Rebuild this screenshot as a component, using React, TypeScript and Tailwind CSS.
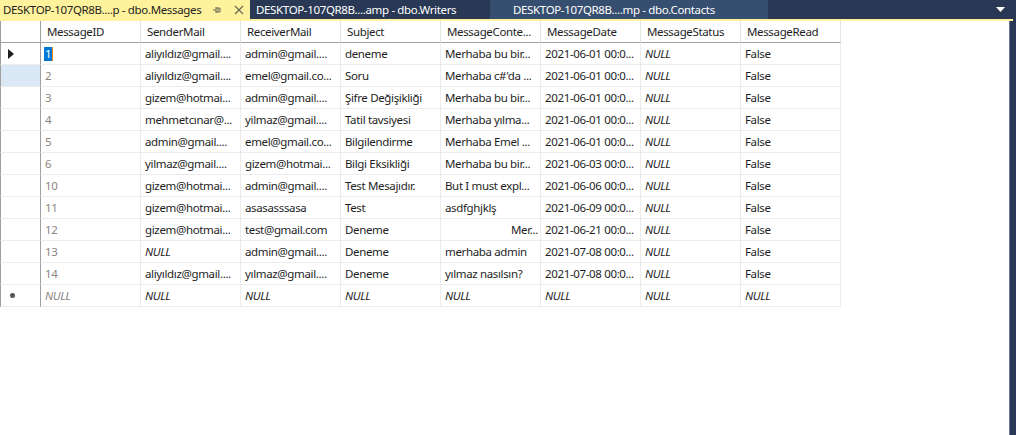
import React from "react";

type Row = {
  id: string;
  sender: string;
  receiver: string;
  subject: string;
  content: string;
  date: string;
  contentRight?: boolean;
};

const COLUMNS = [
  "MessageID",
  "SenderMail",
  "ReceiverMail",
  "Subject",
  "MessageConte...",
  "MessageDate",
  "MessageStatus",
  "MessageRead",
];

const ROWS: Row[] = [
  { id: "1", sender: "aliyıldız@gmail....", receiver: "admin@gmail....", subject: "deneme", content: "Merhaba bu bir...", date: "2021-06-01 00:0..." },
  { id: "2", sender: "aliyıldız@gmail....", receiver: "emel@gmail.co...", subject: "Soru", content: "Merhaba c#'da ...", date: "2021-06-01 00:0..." },
  { id: "3", sender: "gizem@hotmai...", receiver: "admin@gmail....", subject: "Şifre Değişikliği", content: "Merhaba bu bir...", date: "2021-06-01 00:0..." },
  { id: "4", sender: "mehmetcınar@...", receiver: "yilmaz@gmail....", subject: "Tatil tavsiyesi", content: "Merhaba yılma...", date: "2021-06-01 00:0..." },
  { id: "5", sender: "admin@gmail....", receiver: "emel@gmail.co...", subject: "Bilgilendirme", content: "Merhaba Emel ...", date: "2021-06-01 00:0..." },
  { id: "6", sender: "yilmaz@gmail....", receiver: "gizem@hotmai...", subject: "Bilgi Eksikliği", content: "Merhaba bu bir...", date: "2021-06-03 00:0..." },
  { id: "10", sender: "gizem@hotmai...", receiver: "admin@gmail....", subject: "Test Mesajıdır.", content: "But I must expl...", date: "2021-06-06 00:0..." },
  { id: "11", sender: "gizem@hotmai...", receiver: "asasasssasa", subject: "Test", content: "asdfghjklş", date: "2021-06-09 00:0..." },
  { id: "12", sender: "gizem@hotmai...", receiver: "test@gmail.com", subject: "Deneme", content: "Mer...", date: "2021-06-21 00:0...", contentRight: true },
  { id: "13", sender: "NULL", receiver: "admin@gmail....", subject: "Deneme", content: "merhaba admin", date: "2021-07-08 00:0..." },
  { id: "14", sender: "aliyıldız@gmail....", receiver: "yılmaz@gmail....", subject: "Deneme", content: "yılmaz nasılsın?", date: "2021-07-08 00:0..." },
];

function Cell({ value, gray, right }: { value: string; gray?: boolean; right?: boolean }) {
  const isNull = value === "NULL";
  return (
    <div
      className={`h-[22px] border-r border-b border-[#ececec] pl-[4px] pr-[2px] flex items-center overflow-hidden whitespace-nowrap ${
        right ? "justify-end" : ""
      } ${gray ? "text-[#8b8580]" : "text-[#1e1e1e]"} ${isNull ? "italic" : ""}`}
    >
      {value}
    </div>
  );
}

function Tab({ label, active, hover }: { label: string; active?: boolean; hover?: boolean }) {
  if (active) {
    return (
      <div className="w-[250px] h-full bg-[#fff29d] flex items-center pl-[3px] text-[#1e1e1e]">
        <span className="whitespace-nowrap">{label}</span>
        <svg width="10" height="10" viewBox="0 0 10 10" className="ml-[11px]">
          <path d="M1 5h3M4 2v6M4 3h4v4H4M6 3v4" stroke="#6b6b5a" strokeWidth="1" fill="none" />
        </svg>
        <svg width="10" height="10" viewBox="0 0 10 10" className="ml-[12px]">
          <path d="M1 1l8 8M9 1l-8 8" stroke="#6b6b5a" strokeWidth="1.2" />
        </svg>
      </div>
    );
  }
  return (
    <div
      className={`h-full flex items-center whitespace-nowrap text-white ${
        hover ? "w-[278px] bg-[#364e6f] pl-[23px]" : "w-[240px] pl-[6px]"
      }`}
    >
      {label}
    </div>
  );
}

export default function App() {
  return (
    <div
      className="w-[1016px] h-[435px] bg-[#293955] flex flex-col text-[11.5px] tracking-[-0.35px] overflow-hidden"
      style={{ fontFamily: '"Noto Sans", "Open Sans", sans-serif' }}
    >
      <div className="h-[19px] flex items-center shrink-0">
        <Tab label="DESKTOP-107QR8B....p - dbo.Messages" active />
        <Tab label="DESKTOP-107QR8B....amp - dbo.Writers" />
        <Tab label="DESKTOP-107QR8B....mp - dbo.Contacts" hover />
        <div className="flex-1" />
        <svg width="9" height="5" viewBox="0 0 9 5" className="mr-[11px]">
          <path d="M0 0h9L4.5 5z" fill="#ffffff" />
        </svg>
      </div>
      <div className="h-[2px] bg-[#fff29d] mr-[3px] shrink-0" />
      <div className="flex-1 flex">
        <div className="flex-1 bg-white">
          <div className="grid grid-cols-[41px_repeat(8,100px)] w-max">
            <div className="h-[22px] border-l border-[#a0a0a0] border-r border-b" />
            {COLUMNS.map((c) => (
              <div
                key={c}
                className="h-[22px] border-r border-[#e5e5e5] border-b-[1px] border-b-[#a0a0a0] pl-[6px] flex items-center text-[#1e1e1e] whitespace-nowrap overflow-hidden"
              >
                {c}
              </div>
            ))}
            {ROWS.map((r, i) => (
              <React.Fragment key={r.id}>
                <div
                  className={`h-[22px] border-l border-r border-[#a0a0a0] border-b border-b-[#ececec] flex items-center pl-[7px] ${
                    i === 1 ? "bg-[#dae8f6]" : "bg-white"
                  }`}
                >
                  {i === 0 && (
                    <svg width="6" height="10" viewBox="0 0 6 10">
                      <path d="M0 0l6 5-6 5z" fill="#1e1e1e" />
                    </svg>
                  )}
                </div>
                {i === 0 ? (
                  <div className="h-[22px] border-r border-b border-[#ececec] px-[3px] flex items-center">
                    <span className="bg-[#0078d7] text-white px-[1px] leading-[14px] border-r border-[#ff8c00]">1</span>
                  </div>
                ) : (
                  <Cell value={r.id} gray />
                )}
                <Cell value={r.sender} />
                <Cell value={r.receiver} />
                <Cell value={r.subject} />
                <Cell value={r.content} right={r.contentRight} />
                <Cell value={r.date} />
                <Cell value="NULL" />
                <Cell value="False" />
              </React.Fragment>
            ))}
            <div className="h-[22px] border-l border-r border-[#a0a0a0] border-b border-b-[#ececec] flex items-center pl-[9px]">
              <span className="w-[5px] h-[5px] rounded-full bg-[#555555]" />
            </div>
            <Cell value="NULL" gray />
            {COLUMNS.slice(1).map((c) => (
              <Cell key={c} value="NULL" />
            ))}
          </div>
        </div>
        <div className="w-[7px] border-l border-[#6b7a99] bg-[#293955]" />
      </div>
    </div>
  );
}
